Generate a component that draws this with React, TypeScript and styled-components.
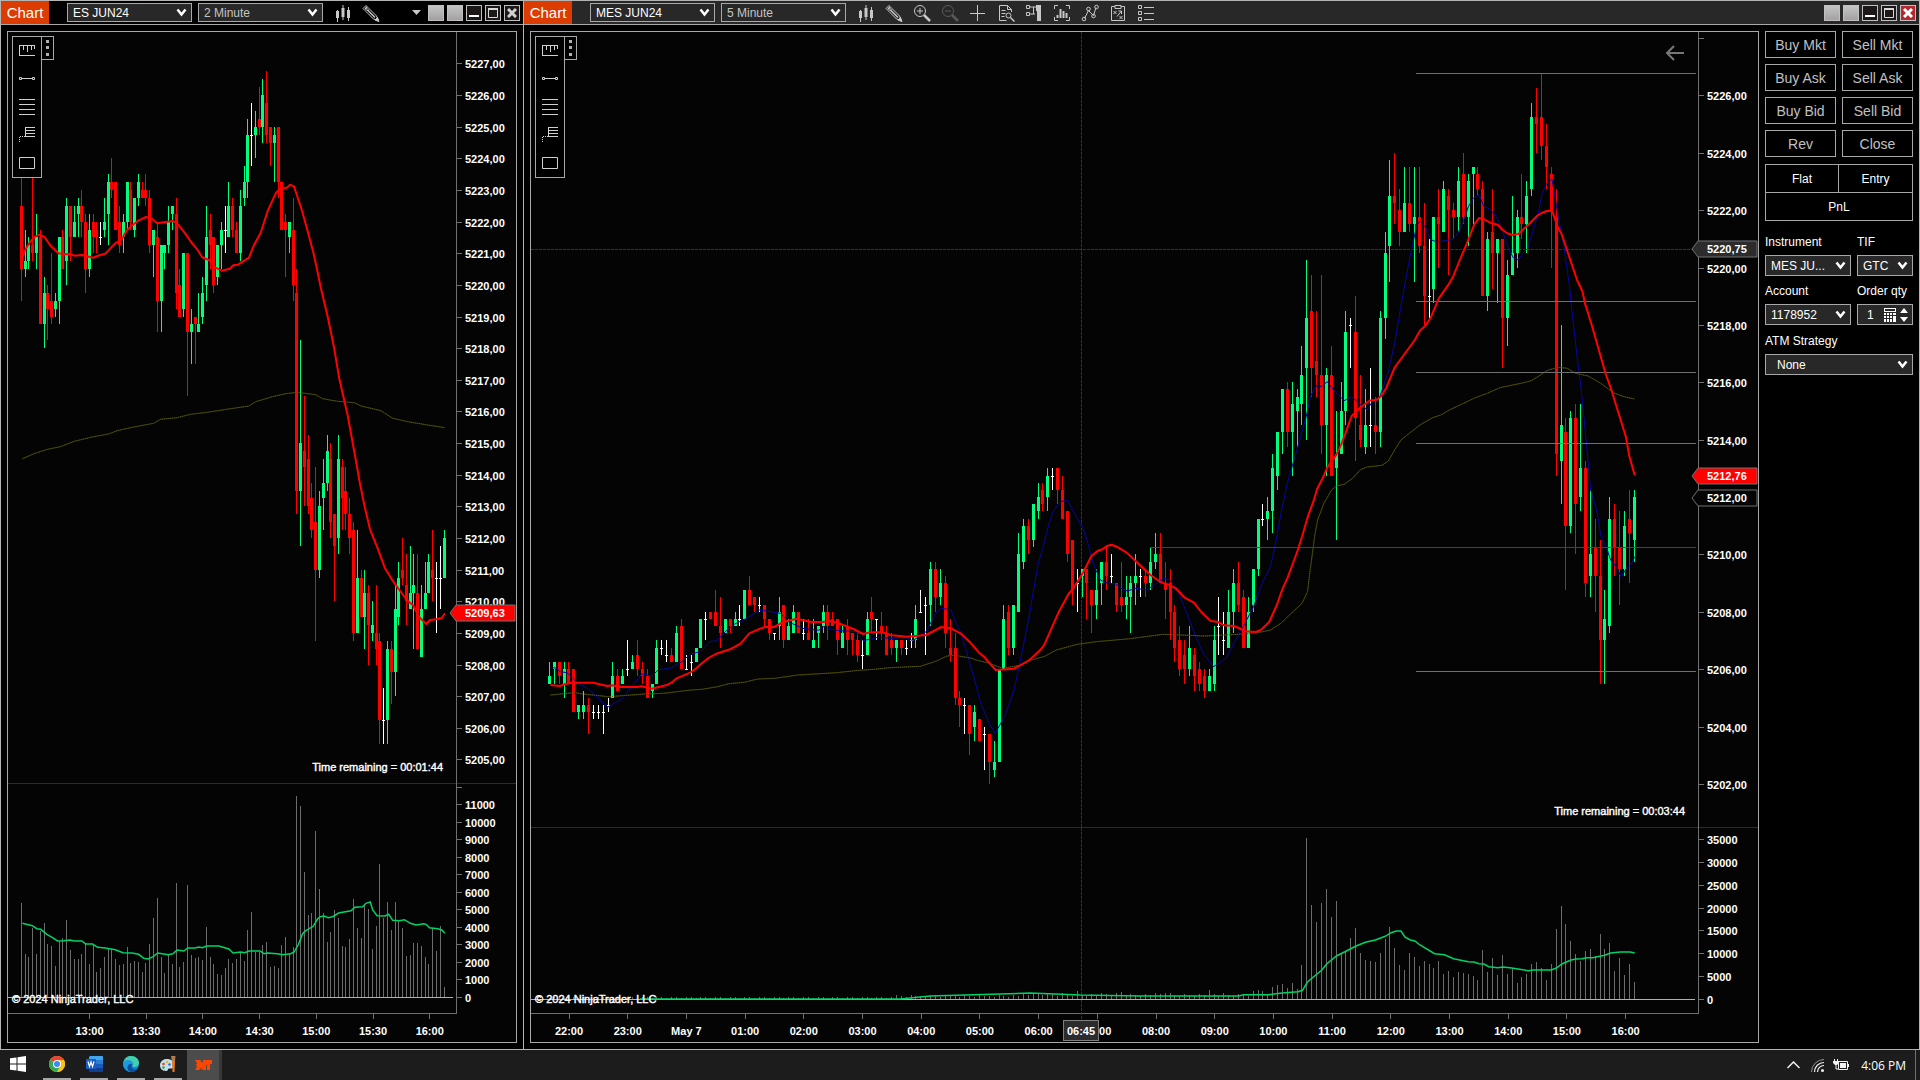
import React from "react";
import styled, { createGlobalStyle, css } from "styled-components";

/* ------------------------------------------------------------------ */
/* Market data: each bar is "<type> high top bottom low", in quarter   */
/* points above 5200. g = up, r = down, w = unchanged.                 */
/* ------------------------------------------------------------------ */

const ES_BARS = `r95 90 82 78,g87 83 82 81,g86 85 83 82,r95 85 84 83,g89 86 84 82,r87 86 75 75,g81 79 75 72,r80 79 77 73,r84 78 76 75,g79 78 77 76,
g86 86 78 75,r87 86 82 82,g91 90 83 80,r90 90 86 83,g90 88 86 86,g91 90 89 86,r92 90 88 86,r89 88 82 79,g89 87 82 81,r89 88 86 84,
r88 87 86 84,w88 86 86 85,g91 88 87 86,g94 93 89 85,r96 93 92 91,r93 93 87 87,r90 88 85 84,g89 88 86 84,g93 93 88 87,r93 92 88 87,
g91 91 87 86,g94 93 91 90,r93 92 91 91,r94 92 91 90,r92 91 85 84,g87 87 85 81,r88 86 78 74,g85 85 78 74,g85 85 84 82,g90 88 85 84,
g90 90 89 87,r91 89 79 77,r82 80 76 76,g84 84 77 76,r84 84 74 66,g77 75 74 70,r76 76 75 70,g79 75 74 74,g81 79 76 75,g90 86 80 78,
r89 87 85 82,r86 86 80 79,g85 85 81 80,g88 87 85 82,w90 87 87 84,g93 90 86 86,r91 90 87 86,r88 87 84 84,g92 90 84 83,g95 93 91 90,
g101 99 93 91,w103 99 99 95,g102 100 99 96,r105 101 100 99,g106 104 100 98,r107 103 99 98,r100 100 98 95,g100 99 98 93,r100 100 93 91,r93 93 87 87,
r89 88 87 81,g88 88 86 84,r91 87 80 78,r82 79 54 51,g73 60 54 47,r66 59 57 52,r61 58 52 51,r55 53 49 48,r57 50 44 35,g54 52 44 43,
g58 55 53 49,g61 59 55 54,r60 58 50 48,r51 51 47 40,g61 58 48 46,r58 57 53 49,r57 54 51 49,r53 51 48 46,r50 49 36 35,g49 43 36 36,
r44 43 38 38,g44 41 38 34,r42 41 37 32,g40 37 36 35,r42 36 34 32,r36 35 25 22,w29 25 25 22,g35 34 25 22,r35 34 31 27,g42 39 31 28,
g45 43 38 37,r48 44 43 42,r46 42 40 37,g47 41 39 39,g46 42 41 34,r46 41 34 34,g42 39 33 33,g45 41 39 39,g46 45 41 41,r49 44 43 40,
w45 43 43 36,w47 43 43 39,g49 48 43 43`;

const MES_BARS = `g25 23 22 22,g25 25 24 22,r25 25 23 22,g25 24 22 20,r25 24 22 22,r24 24 18 18,g19 19 18 17,g21 19 18 17,r20 19 18 15,w19 18 18 17,
w19 18 18 17,w19 18 18 15,w20 19 19 18,g25 23 20 20,r24 23 21 21,g24 23 22 22,w28 24 24 23,g26 25 24 24,r28 26 24 23,r25 24 23 22,
r24 23 20 20,g22 22 21 20,g28 27 22 22,w28 27 27 26,w28 26 26 25,r27 26 25 25,g30 29 25 25,r31 30 24 24,w26 24 24 24,w26 25 25 23,
g27 27 25 25,g31 31 27 27,w32 31 31 28,r32 32 31 31,r35 32 30 30,r34 30 29 27,g31 31 29 29,r31 31 30 29,g32 31 30 30,w33 31 31 30,
g35 35 31 31,r37 35 33 33,r34 34 33 32,w34 33 33 32,r33 33 31 30,r31 31 29 28,w29 29 29 28,g34 32 30 28,r33 33 28 27,g31 30 28 28,
g33 32 29 29,r32 32 29 29,w31 29 29 28,r31 29 28 28,g31 28 27 27,g30 30 29 27,g33 32 30 29,r33 32 30 28,r32 31 30 30,r31 31 28 26,
g30 29 27 27,r31 30 28 26,r29 29 28 26,r29 28 26 25,w28 26 26 24,g32 31 26 26,r34 32 31 29,w31 31 31 28,r32 30 29 28,r30 29 26 26,
r29 28 27 26,g28 28 27 25,r28 28 27 26,w28 27 27 26,w29 28 28 27,g33 31 28 27,w35 32 32 32,w34 33 33 26,g39 38 33 30,r39 38 34 32,
g38 36 34 33,r37 36 29 27,r31 27 26 25,r29 27 20 19,r21 20 19 16,w20 19 19 15,r19 19 15 12,g19 18 16 14,r17 17 14 14,w16 15 15 10,
r15 15 11 8,g14 11 10 9,g24 24 11 11,g33 31 24 24,r33 32 27 26,g33 33 27 26,g43 40 32 32,g45 44 39 38,r45 44 42 40,g47 47 42 41,
g50 48 46 45,r50 49 47 46,g52 51 48 46,w52 51 51 49,r52 52 49 47,r51 49 45 45,r46 46 40 39,r42 42 35 33,w38 36 36 32,g38 38 37 34,
r38 38 36 31,r35 35 33 29,g38 35 33 31,g39 39 36 33,r41 39 37 35,w40 37 37 36,r36 36 33 32,r39 34 33 32,g37 34 33 31,g37 36 34 29,
g40 37 36 33,w38 37 37 34,r38 37 36 34,g41 39 36 35,g43 40 39 38,r43 40 36 36,r39 36 35 31,r38 36 32 28,r33 32 27 25,r30 28 24 23,
r28 26 24 22,g30 27 24 23,r27 26 23 21,r25 24 22 21,r24 23 21 20,g24 23 21 21,g30 28 22 21,w34 30 30 26,w32 28 28 26,g35 32 27 27,
g38 36 32 29,r39 36 33 32,r35 34 27 27,g34 32 27 27,g38 38 33 32,g45 45 38 37,w47 45 45 44,g48 46 45 42,g54 52 46 43,g57 57 51 49,
g63 63 57 54,r64 63 57 55,g64 61 57 51,g63 62 60 55,g69 65 61 58,g81 73 66 56,r79 74 66 62,r74 67 65 62,r79 65 58 54,g66 65 58 51,
r69 65 51 51,g60 54 52 42,g64 60 54 54,g74 71 60 58,w73 72 72 66,r76 71 59 53,r65 58 56 55,g63 58 55 54,w66 58 58 55,r62 58 57 54,
g74 73 57 55,g85 82 73 70,g95 90 83 78,r96 90 89 86,r91 88 85 83,g94 89 85 85,r94 89 86 85,g94 87 86 78,r94 87 83 82,r89 83 76 72,
w84 76 76 73,g87 87 77 75,r91 87 86 80,g92 91 85 85,r91 90 88 79,r89 88 87 84,g94 92 87 85,r96 93 87 86,g93 92 87 83,g94 94 93 86,
r94 93 91 90,r92 91 76 76,g85 84 76 74,r91 85 82 77,g84 84 82 75,r84 84 73 66,g81 79 73 69,g90 82 79 79,g88 87 82 80,r93 87 86 84,
g92 90 86 82,g103 101 91 90,r105 101 100 96,r107 101 97 95,r100 97 94 91,r94 93 88 80,r91 87 54 51,g72 58 53 47,r59 57 44 35,g60 59 44 43,
r61 59 47 40,g61 52 48 46,r53 52 36 34,g49 40 37 34,r45 41 37 32,r42 37 28 22,g35 31 28 22,g48 45 30 29,r47 45 41 37,r46 41 38 33,
g46 44 38 37,r49 45 43 36,g49 48 42 39`;

/* Volume of each bar, in thirds of a pixel of bar height. */
const from = (base: number, tops: number[]) => tops.map((t) => base - t);

const ES_VOLUME = from(652, [
  369, 522, 531, 444, 522, 453, 429, 492, 498, 558, 484, 474, 420, 510, 537, 537, 522, 490, 552, 492, 576, 564, 531, 507, 507,
  537, 555, 552, 501, 549, 543, 546, 576, 549, 492, 414, 354, 531, 579, 524, 552, 309, 561, 546, 315, 525, 534, 531, 540, 441,
  531, 552, 582, 585, 564, 537, 549, 537, 516, 543, 450, 396, 516, 516, 495, 486, 561, 558, 564, 495, 471, 519, 501, 48, 78,
  276, 405, 399, 153, 327, 400, 486, 456, 390, 414, 498, 501, 477, 357, 444, 474, 372, 387, 507, 438, 252, 414, 366, 450, 366,
  423, 444, 528, 525, 489, 489, 500, 531, 552, 444, 513, 438, 621,
]);

const QUIET_SESSION = Array.from({ length: 145 }, (_, i) =>
  i < 70 ? 3 + (i % 3) * 2 : i < 96 ? 6 + ((i * 5) % 7) : 8 + ((i * 7) % 11) + (i % 9 === 0 ? 8 : 0),
);
const MES_VOLUME = QUIET_SESSION.concat(
  from(598, [
    570, 573, 583, 561, 555, 552, 564, 549, 567, 495, 114, 315, 366, 309, 267, 351, 303, 462, 453, 414, 384, 459, 480, 483, 486,
    459, 417, 381, 444, 495, 510, 459, 471, 498, 483, 492, 504, 483, 522, 513, 531, 516, 519, 522, 528, 540, 450, 516, 474, 525,
    465, 522, 504, 549, 531, 522, 492, 486, 504, 540, 492, 387, 318, 372, 423, 462, 483, 453, 447, 468, 402, 447, 429, 513, 474,
    525, 492, 546,
  ]),
);

/* ------------------------------------------------------------------ */
/* Indicator curves                                                    */
/* ------------------------------------------------------------------ */

const seg = (ox: number, oy: number, kx: number, pts: number[]) => {
  const out: string[] = [];
  for (let i = 0; i < pts.length; i += 2) {
    out.push(`${(ox + pts[i] / kx).toFixed(1)},${(oy + pts[i + 1] / 3).toFixed(1)}`);
  }
  return out.join(" ");
};

const ES_FAST =
  seg(0, 170, 2.992, [
    65, 270, 75, 240, 90, 215, 105, 200, 118, 194, 133, 201, 150, 226, 175, 250, 195, 253, 210, 252, 222, 257, 245, 255, 278, 263,
    300, 255, 315, 251, 345, 220, 365, 207, 380, 180, 400, 163, 415, 151, 437, 141, 452, 145, 470, 160, 490, 157, 517, 153, 530, 160,
    550, 185, 575, 220, 590, 238, 605, 262, 630, 272, 645, 293, 663, 302, 688, 296, 698, 286, 712, 284, 745, 263, 760, 225, 780, 188,
    800, 125, 825, 70, 838, 56, 858, 53, 868, 44, 880, 50, 903, 120, 925, 200, 938, 250, 948, 295, 960, 355, 980, 437, 1000, 535,
    1015, 625, 1040, 735, 1070, 900,
  ]) +
  " " +
  seg(0, 480, 2.992, [
    1076, 5, 1090, 75, 1107, 148, 1130, 205, 1152, 265, 1175, 302, 1195, 330, 1217, 360, 1235, 375, 1255, 412, 1275, 432, 1287, 420,
    1305, 418, 1322, 414, 1331, 400,
  ]);

const ES_SLOW = seg(0, 170, 2.992, [
  67, 866, 105, 850, 142, 838, 180, 830, 222, 814, 280, 800, 325, 792, 350, 782, 400, 771, 460, 760, 480, 748, 530, 743, 570, 733,
  620, 727, 690, 716, 745, 708, 765, 695, 815, 680, 855, 671, 890, 667, 945, 674, 965, 686, 1010, 694, 1060, 698, 1080, 708, 1140, 722,
  1175, 745, 1220, 755, 1280, 765, 1331, 773,
]);

const ES_VOLUME_AVG = seg(0, 780, 2.992, [
  67, 430, 97, 437, 110, 446, 122, 448, 140, 463, 157, 473, 172, 483, 190, 482, 210, 480, 222, 483, 245, 483, 256, 492, 277, 492,
  292, 502, 315, 504, 345, 509, 368, 518, 395, 519, 415, 523, 430, 535, 443, 537, 458, 530, 472, 519, 490, 522, 503, 524, 517, 521,
  530, 510, 550, 513, 562, 504, 583, 504, 595, 501, 605, 503, 618, 498, 655, 498, 685, 507, 697, 519, 720, 516, 732, 518, 745, 513,
  778, 513, 790, 521, 800, 519, 830, 521, 845, 524, 870, 521, 880, 516, 893, 493, 905, 462, 913, 453, 925, 446, 937, 439, 950, 417,
  958, 410, 970, 408, 982, 413, 995, 410, 1013, 399, 1050, 392, 1062, 382, 1085, 380, 1095, 370, 1108, 366, 1115, 390, 1128, 407,
  1152, 408, 1163, 403, 1175, 421, 1195, 422, 1210, 419, 1228, 430, 1245, 435, 1268, 431, 1275, 433, 1285, 443, 1310, 446, 1322, 450,
  1331, 460,
]);

const MES_FAST = [
  seg(530, 450, 2.613, [
    53, 705, 78, 708, 95, 701, 110, 698, 165, 698, 202, 708, 215, 706, 235, 711, 280, 711, 292, 709, 318, 716, 355, 706, 370, 698,
    383, 685, 420, 667, 433, 656, 446, 643, 465, 625, 485, 612, 525, 597, 550, 581, 573, 550, 595, 539, 613, 531, 638, 531, 662, 516,
    697, 506, 735, 516, 765, 516, 783, 513, 803, 518, 845, 537, 870, 552, 890, 547, 920, 547, 945, 556, 985, 560, 1035, 555,
    1075, 531, 1100, 535, 1125, 550, 1150, 577, 1175, 610, 1188, 622, 1205, 645, 1217, 660, 1265, 656, 1305, 630, 1330, 604,
    1343, 586, 1380, 490, 1407, 432, 1420, 415, 1445, 368, 1467, 318, 1483, 303, 1497, 297, 1507, 288, 1520, 284, 1533, 290, 1559, 308,
  ]),
  seg(1100, 230, 2.376, [
    65, 970, 92, 1002, 120, 1035, 145, 1057, 165, 1065, 180, 1075, 200, 1102, 223, 1118, 240, 1145, 262, 1172, 280, 1176, 295, 1186,
    318, 1188, 330, 1194, 345, 1204, 370, 1206, 382, 1200, 402, 1176, 420, 1125, 434, 1075, 446, 1042, 457, 1005, 470, 960, 480, 920,
    495, 855, 506, 818, 516, 776, 530, 742, 540, 712, 562, 674, 575, 638, 598, 558, 618, 533, 640, 512, 657, 509, 668, 499, 680, 474,
    700, 413, 715, 387, 748, 330, 760, 302, 772, 289, 785, 265, 805, 205, 828, 164, 840, 137, 855, 90, 870, 45,
  ]),
  seg(1340, 30, 3, [
    403, 583, 417, 564, 432, 568, 455, 580, 473, 584, 488, 600, 502, 610, 517, 615, 535, 612, 562, 587, 592, 557, 605, 549, 620, 543,
    636, 542, 655, 595, 665, 613, 685, 672, 712, 752, 727, 783, 737, 828,
  ]),
  seg(1440, 300, 3, [432, 0, 455, 75, 497, 222, 515, 272, 525, 305, 545, 370, 558, 412, 568, 468, 584, 526]),
].join(" ");

const MES_SLOW = [
  seg(530, 450, 2.613, [
    53, 735, 115, 728, 140, 732, 205, 740, 300, 732, 350, 730, 420, 720, 450, 718, 490, 710, 520, 701, 560, 697, 595, 687, 640, 685,
    700, 675, 800, 668, 860, 661, 900, 658, 940, 653, 1020, 649, 1060, 634, 1090, 618, 1110, 616, 1155, 625, 1165, 630, 1195, 638,
    1235, 655, 1285, 645, 1305, 632, 1345, 619, 1375, 600, 1430, 583, 1480, 575, 1568, 566,
  ]),
  seg(1100, 230, 2.376, [
    150, 1213, 250, 1218, 340, 1212, 380, 1207, 405, 1200, 430, 1180, 450, 1155, 480, 1120, 493, 1085, 500, 1015, 510, 920, 517, 870,
    532, 820, 550, 780, 562, 768, 580, 763, 600, 745, 620, 718, 635, 711, 670, 706, 685, 693, 700, 660, 715, 630, 735, 610, 760, 585,
    790, 563, 810, 555, 830, 540, 890, 504, 920, 490, 950, 473, 1000, 460, 1025, 452, 1040, 440, 1065, 420, 1090, 412, 1110, 415,
    1130, 430, 1160, 438, 1190, 460, 1220, 488, 1245, 500, 1270, 507,
  ]),
].join(" ");

const MES_SIGNAL = [
  seg(530, 450, 2.613, [
    53, 652, 70, 655, 78, 665, 97, 668, 110, 682, 123, 698, 150, 715, 175, 740, 202, 772, 240, 747, 265, 712, 292, 672, 318, 678,
    335, 660, 370, 653, 395, 636, 420, 612, 445, 605, 470, 575, 488, 572, 510, 545, 535, 522, 570, 503, 600, 480, 655, 490, 675, 515,
    712, 535, 755, 541, 765, 530, 800, 541, 850, 545, 870, 572, 910, 562, 955, 566, 970, 557, 1000, 572, 1035, 545, 1060, 490,
    1075, 475, 1100, 480, 1112, 516, 1125, 545, 1138, 595, 1162, 690, 1178, 760, 1200, 820, 1215, 850, 1240, 800, 1265, 720,
    1285, 610, 1305, 495, 1328, 340, 1340, 295, 1355, 225, 1367, 185, 1385, 155, 1405, 151, 1420, 185, 1445, 235, 1458, 280,
    1470, 335, 1490, 390, 1505, 398, 1530, 402, 1545, 415,
  ]),
  seg(1100, 230, 2.376, [
    65, 1083, 85, 1075, 110, 1080, 130, 1065, 150, 1045, 165, 1050, 180, 1070, 200, 1130, 218, 1190, 245, 1270, 270, 1310, 300, 1285,
    320, 1235, 340, 1190, 365, 1130, 385, 1060, 405, 1010, 418, 935, 430, 850, 445, 760, 470, 650, 490, 560, 500, 500, 515, 465,
    525, 470, 540, 455, 555, 480, 580, 512, 598, 500, 620, 525, 635, 540, 645, 518, 665, 500, 685, 425, 700, 340, 715, 230, 735, 90,
    750, 0,
  ]),
  seg(1340, 30, 3, [
    228, 590, 240, 573, 255, 590, 270, 628, 290, 636, 340, 628, 355, 607, 370, 575, 385, 530, 400, 505, 417, 494, 432, 530, 450, 537,
    470, 562, 487, 600, 505, 655, 520, 683, 535, 690, 548, 670, 563, 655, 578, 605, 595, 550, 605, 495, 620, 460, 636, 447, 645, 500,
    655, 560, 672, 650, 690, 780,
  ]),
  seg(1440, 300, 3, [
    392, 0, 410, 160, 425, 280, 440, 440, 452, 570, 470, 630, 483, 710, 500, 745, 512, 780, 530, 802, 543, 830, 560, 805, 572, 795,
    584, 770,
  ]),
].join(" ");

const MES_VOLUME_AVG =
  "640,999 900,999 930,996 1000,994 1030,993 1080,995 " +
  seg(1140, 800, 2.529, [
    0, 588, 250, 588, 262, 584, 325, 584, 360, 579, 400, 575, 411, 571, 423, 547, 436, 533, 460, 510, 472, 492, 497, 468, 522, 453,
    545, 439, 570, 427, 595, 420, 620, 409, 635, 398, 648, 393, 660, 393, 670, 411, 682, 419, 695, 423, 708, 435, 745, 461, 770, 464,
    793, 476, 830, 485, 845, 486, 857, 491, 870, 492, 882, 500, 905, 503, 918, 501, 940, 504, 982, 512, 995, 510, 1040, 510,
    1053, 504, 1067, 492, 1090, 480, 1103, 477, 1118, 476, 1130, 473, 1145, 473, 1175, 466, 1190, 459, 1215, 456, 1240, 456, 1251, 459,
  ]);

/* ------------------------------------------------------------------ */
/* Styles                                                              */
/* ------------------------------------------------------------------ */

const LINE = "#a8a8a8";

const Global = createGlobalStyle`
  * { box-sizing: border-box; }
  body { margin: 0; background: #000; }
  body, button, input, select { font-family: "Liberation Sans", Arial, sans-serif; }
`;

const Desktop = styled.div`
  height: 100vh;
  display: flex;
  flex-direction: column;
  overflow: hidden;
  color: #fff;
  font-size: 12px;
`;

const Workspace = styled.main`
  flex: 1;
  min-height: 0;
  display: grid;
  grid-template-columns: minmax(0, 523fr) minmax(0, 1397fr);
`;

const Window = styled.section<{ $last?: boolean }>`
  display: flex;
  flex-direction: column;
  min-height: 0;
  background: #000;
  border: 1px solid #b4b4b4;
  border-right-width: ${(p) => (p.$last ? 1 : 0)}px;
`;

const TitleBar = styled.header<{ $active?: boolean }>`
  flex: none;
  height: 24px;
  display: flex;
  align-items: center;
  padding-right: 3px;
  border-bottom: 1px solid ${LINE};
  background: ${(p) => (p.$active ? "#282828" : "#000")};
`;

const TitleTag = styled.h1`
  margin: 0 18px 0 0;
  width: 48px;
  height: 23px;
  line-height: 23px;
  text-align: center;
  font-size: 15px;
  font-weight: 400;
  background: #dc3c00;
`;

const SelectBox = styled.span<{ $h?: number }>`
  display: grid;
  align-items: center;
  height: ${(p) => p.$h ?? 21}px;
  background: #282828;
  border: 1px solid ${LINE};
  > * { grid-area: 1 / 1; }
  > svg { justify-self: end; margin-right: 4px; pointer-events: none; }
`;

const TitleSelectBox = styled(SelectBox)`
  width: 125px;
  margin-right: 6px;
`;

const Select = styled.select<{ $dim?: boolean; $pad?: number }>`
  appearance: none;
  width: 100%;
  height: 100%;
  min-width: 0;
  margin: 0;
  padding: 0 0 0 ${(p) => p.$pad ?? 5}px;
  border: 0;
  outline: 0;
  background: transparent;
  color: ${(p) => (p.$dim ? "#c4c4c4" : "#fff")};
  font-size: 12px;
`;

const bareButton = css`
  display: grid;
  place-items: center;
  padding: 0;
  border: 0;
  background: none;
  color: #c8c8c8;
`;

const IconButton = styled.button<{ $narrow?: boolean }>`
  ${bareButton}
  flex: none;
  width: ${(p) => (p.$narrow ? 24 : 28)}px;
  height: 22px;
  &:disabled { color: #5a5a5a; }
`;

const Spacer = styled.span`
  flex: 1;
`;

const WindowButtons = styled.div`
  display: flex;
  align-items: center;
  gap: 3px;
`;

const WindowButton = styled.button<{ $kind?: "link" | "close" }>`
  ${bareButton}
  width: 16px;
  height: 16px;
  border: 1px solid #c0c0c0;
  color: #fff;
  background: ${(p) =>
    p.$kind === "link" ? "linear-gradient(#c4c4c4, #a4a0a4)" : p.$kind === "close" ? "#b42830" : "#1c1818"};
`;

const Content = styled.div`
  flex: 1;
  min-height: 0;
  display: flex;
  gap: 6px;
  padding: 6px;
`;

const ChartFrame = styled.div`
  position: relative;
  flex: 1;
  min-width: 0;
  display: flex;
  border: 1px solid ${LINE};
  background: #040404;
`;

const Plot = styled.svg`
  flex: 1;
  min-width: 0;
  min-height: 0;
  font-family: "Liberation Sans", Arial, sans-serif;
  font-size: 11px;
  text { fill: #fff; font-weight: 700; }
  text.note { font-weight: 400; stroke: #fff; stroke-width: 0.4; }
`;

const Palette = styled.div`
  position: absolute;
  top: 4px;
  left: 4px;
  display: flex;
  align-items: flex-start;
`;

const Tools = styled.div`
  display: flex;
  flex-direction: column;
  width: 30px;
  background: #000;
  border: 1px solid ${LINE};
`;

const ToolButton = styled.button`
  ${bareButton}
  height: 28px;
  color: #d0d0d0;
`;

const Grip = styled.button`
  ${bareButton}
  width: 12px;
  height: 24px;
  background: #000;
  border: 1px solid ${LINE};
  border-left: 0;
`;

const OrderPanel = styled.aside`
  flex: none;
  width: 148px;
  display: flex;
  flex-direction: column;
`;

const OrderButtons = styled.div`
  display: grid;
  grid-template-columns: 1fr 1fr;
  gap: 6px;
`;

const OrderButton = styled.button`
  height: 27px;
  padding: 0;
  border: 1px solid ${LINE};
  background: #000;
  color: #c0c0c0;
  font-size: 14px;
`;

const Position = styled.div`
  margin-top: 7px;
  display: grid;
  grid-template-columns: 72px 1fr;
  gap: 1px;
  padding: 1px;
  background: ${LINE};
`;

const PositionCell = styled.div<{ $wide?: boolean }>`
  grid-column: ${(p) => (p.$wide ? "1 / -1" : "auto")};
  height: 27px;
  line-height: 29px;
  text-align: center;
  background: #000;
`;

const Fields = styled.div`
  margin-top: 12px;
  display: grid;
  grid-template-columns: 86px 56px;
  column-gap: 6px;
`;

const Field = styled.label<{ $wide?: boolean }>`
  grid-column: ${(p) => (p.$wide ? "1 / -1" : "auto")};
  margin-top: ${(p) => (p.$wide ? 1 : 0)}px;
  display: flex;
  flex-direction: column;
  height: 49px;
  line-height: 18px;
  > span:first-child { height: 22px; }
`;

const QtyInput = styled.input`
  width: 100%;
  height: 100%;
  min-width: 0;
  padding: 0 0 0 9px;
  border: 0;
  outline: 0;
  background: transparent;
  color: #fff;
  font-size: 12px;
`;

const Taskbar = styled.footer`
  flex: none;
  height: 30px;
  display: flex;
  background: #1c1c1c;
`;

const TaskButton = styled.button<{ $running?: boolean; $active?: boolean }>`
  ${bareButton}
  width: 28px;
  margin-right: 9px;
  border-bottom: 2px solid ${(p) => (p.$running ? "#a8a8a8" : "transparent")};
  ${(p) =>
    p.$active &&
    css`
      width: 35px;
      margin: 0 0 0 -4px;
      border-bottom: 0;
      border-right: 3px solid #383838;
      background: #4c4c4c;
    `}
`;

const StartButton = styled(TaskButton)`
  width: 36px;
  margin-right: 7px;
`;

const Tray = styled.div`
  display: flex;
  align-items: center;
  padding-right: 9px;
  margin-right: 4px;
  border-right: 1px solid #707070;
  font-family: "Open Sans", "Noto Sans", sans-serif;
`;

const TrayButton = styled.button`
  ${bareButton}
  width: 24px;
  height: 30px;
  color: #f0f0f0;
`;

const Clock = styled.time`
  margin-left: 8px;
`;

/* ------------------------------------------------------------------ */
/* Icons                                                               */
/* ------------------------------------------------------------------ */

const Chevron = () => (
  <svg width="11" height="9" viewBox="0 0 11 9" fill="none" stroke="#fff" strokeWidth="2.500">
    <path d="M1.500 1.500 5.500 6.500 9.500 1.500" />
  </svg>
);

const Glyph = ({ children }: { children: React.ReactNode }) => (
  <svg width="18" height="18" viewBox="0 0 18 18" fill="none" stroke="currentColor">
    {children}
  </svg>
);

const CandlesIcon = () => (
  <Glyph>
    <path d="M3.500 6v12M9 1v15M14.500 3v14" />
    <path d="M2 7h3v7H2zM7.500 4h3v9h-3zM13 6h3v8h-3z" fill="currentColor" stroke="none" />
  </Glyph>
);
const PencilIcon = () => (
  <Glyph>
    <path d="M1 4.500 4 1.500 6 3.500 3 6.500zM4 7.500 11.500 15 16.500 17 14.500 12 7 4.500z" />
    <path d="M5.500 6 13 13.500M3 5 5 3" strokeWidth="1.500" />
    <path d="m13 16 4 1.500-1.500-4z" fill="currentColor" />
  </Glyph>
);
const ZoomIcon = ({ plus }: { plus?: boolean }) => (
  <Glyph>
    <circle cx="7" cy="7" r="5.500" />
    <path d={plus ? "M4 7h6M7 4v6" : "M4 7h6"} />
    <path d="m11 11 6 6" strokeWidth="2.500" />
  </Glyph>
);
const CrossIcon = () => (
  <Glyph>
    <path d="M8.500 1v16M1 9.500h15" />
  </Glyph>
);
const DataBoxIcon = () => (
  <Glyph>
    <path d="M14.500 8V5.500L10.500 1.500H2.500v15h7M10.500 1.500v4h4M4.500 6.500h4M4.500 9.500h4M4.500 12.500h3" />
    <circle cx="11.500" cy="11.500" r="2.500" />
    <path d="m13.500 13.500 4 4" strokeWidth="1.500" />
  </Glyph>
);
const TraderIcon = () => (
  <Glyph>
    <path d="M1.500 1.500h3v3h-3zM1.500 8.500h3v3h-3zM5 3h7M5 10h5M8.500 3v7" />
    <path d="M11 1h5v16h-4V7h-1z" fill="currentColor" stroke="none" />
  </Glyph>
);
const IndicatorIcon = () => (
  <Glyph>
    <path d="M1.500 5V1.500H5M13 1.500h3.500V5M16.500 13v3.500H13M5 16.500H1.500V13" />
    <path d="M4.500 14v-3M7.500 14V5M10.500 14V7M13.500 14V9" strokeWidth="2" />
  </Glyph>
);
const StrategyIcon = () => (
  <Glyph>
    <path d="m3.500 14.500 4-8 5 5 2.500-8" />
    <circle cx="3" cy="15" r="1.800" /><circle cx="7.500" cy="5" r="1.800" />
    <circle cx="12.500" cy="12" r="1.800" /><circle cx="15.500" cy="3" r="1.800" />
  </Glyph>
);
const ClipboardIcon = () => (
  <Glyph>
    <path d="M6 2.500H2.500v14h13v-14H12M6 1.500h6v3H6zM8 12.500 12.500 7M12.500 10V7h-3M4.500 7l3 3M7.500 7l-3 3M10.500 12l3 3M13.500 12l-3 3" />
  </Glyph>
);
const ListIcon = () => (
  <Glyph>
    <path d="M1.500 1.500h3v3h-3zM1.500 7.500h3v3h-3zM1.500 13.500h3v3h-3zM7 3.500h10M7 9.500h10M7 15.500h10" />
  </Glyph>
);

const TOOLS: [string, React.ReactNode][] = [
  ["Ruler", <path d="M1 3.500h16M1.500 3v11M1 13.500h16M5.500 4v4M9.500 4v6M13.500 4v4M16.500 4v3" />],
  ["Line", <path d="M1.500 7.500h2v2h-2zM14.500 7.500h2v2h-2zM4 8.500h10" />],
  ["Horizontal lines", <path d="M1 1.500h16M1 6.500h16M1 11.500h16M1 16.500h16" />],
  ["Fibonacci", <g><path d="M7.500 1v10M7 1.500h10M7 4.500h10M7 7.500h10M7 10.500h10" /><path d="M7 10.500H1.500V17" strokeDasharray="1 1" /></g>],
  ["Rectangle", <path d="M1.500 3.500h15v11h-15z" />],
];

/* ------------------------------------------------------------------ */
/* Chart                                                               */
/* ------------------------------------------------------------------ */

type Level = { y: number; label?: string };
type TagSpec = { y: number; text: string; fill: string };

type ChartSpec = {
  name: string;
  left: number;
  right: number;
  axisX: number;
  firstBar: number;
  barStep: number;
  bars: string;
  priceY: (quarters: number) => number;
  volumes: number[];
  volumeBase: number;
  paneY: number;
  prices: Level[];
  volumeLevels: Level[];
  times: { x: number; label: string }[];
  remaining: string;
  remainingY: number;
  tags: TagSpec[];
  fast: string;
  slow: string;
  signal?: string;
  volumeAvg: string;
  levels?: number[];
  full?: boolean;
};

const BAR_COLOR: Record<string, string> = { g: "#00ff7f", r: "#ff0000", w: "#ffffff" };
const AXIS = "#707070";
const AXIS_Y = 1013;

const Bars = ({ c }: { c: ChartSpec }) => (
  <g shapeRendering="crispEdges">
    {c.bars.split(",").map((raw, i) => {
      const bar = raw.trim();
      const [h, t, b, l] = bar.slice(1).split(" ").map((q) => Math.round(c.priceY(Number(q))));
      const x = Math.floor(c.firstBar + i * c.barStep);
      return (
        <g key={i} fill={BAR_COLOR[bar[0]]}>
          <rect x={x} y={h} width={1} height={Math.max(1, l - h)} />
          <rect x={x - 1} y={t} width={3} height={Math.max(1, b - t)} />
        </g>
      );
    })}
  </g>
);

const Tag = ({ x, right, tag }: { x: number; right: number; tag: TagSpec }) => (
  <g>
    <path
      d={`M${x - 6} ${tag.y}l6 -8H${right}v16H${x}z`}
      fill={tag.fill}
      stroke="#707070"
    />
    <text x={x + 9} y={tag.y + 4}>{tag.text}</text>
  </g>
);

const Chart = ({ c }: { c: ChartSpec }) => (
  <ChartFrame>
    <Plot
      viewBox={`${c.left} 32 ${c.right - c.left} 1010`}
      preserveAspectRatio="xMinYMin meet"
      role="img"
      aria-label={c.name}
    >
      <g shapeRendering="crispEdges" stroke={AXIS}>
        <path d={`M${c.left} ${c.paneY + 0.5}H${c.right}`} stroke="#2c2c2c" />
        <path d={`M${c.axisX + 0.5} 32V${AXIS_Y + 1}M${c.left} ${AXIS_Y + 0.5}H${c.axisX}`} />
        {[...c.prices, ...c.volumeLevels].map((p) => (
          <path key={p.y} d={`M${c.axisX + 1} ${Math.round(p.y) + 0.5}h5`} />
        ))}
        {c.times.map((t) => (
          <path key={t.x} d={`M${Math.floor(t.x) + 0.5} ${AXIS_Y + 1}v5`} />
        ))}
      </g>
      {c.full && (
        <g shapeRendering="crispEdges" stroke="#343434" strokeDasharray="3 1">
          <path d={`M${c.left} 249.5H1692M1081.5 32V1021`} />
        </g>
      )}
      <g shapeRendering="crispEdges" fill="#6c6c6c">
        {c.volumes.map((v, i) => (
          <rect
            key={i}
            x={Math.floor(c.firstBar + i * c.barStep)}
            y={c.volumeBase - Math.round(v / 3)}
            width={1}
            height={Math.round(v / 3)}
          />
        ))}
        <rect x={c.left} y={c.volumeBase} width={c.axisX - 3 - c.left} height={1} fill="#b0b0b0" />
      </g>
      <polyline points={c.volumeAvg} fill="none" stroke="#00d26a" strokeWidth={1.5} />
      <polyline points={c.slow} fill="none" stroke="#3a3a04" strokeWidth={1} />
      <Bars c={c} />
      {c.signal && <polyline points={c.signal} fill="none" stroke="#0606a0" strokeWidth={1} />}
      <polyline points={c.slow} fill="none" stroke="#545408" strokeWidth={1} strokeDasharray="1 1" />
      {c.levels && (
        <g shapeRendering="crispEdges" stroke="#707070">
          {c.levels.map((y) => (
            <path key={y} d={`M1416 ${y + 0.5}H1696`} />
          ))}
          <path d="M1150 547.5H1696" stroke="#e00000" />
        </g>
      )}
      <polyline points={c.fast} fill="none" stroke="#ff0000" strokeWidth={2} strokeLinejoin="round" />
      {[...c.prices, ...c.volumeLevels].map(
        (p) => p.label && <text key={p.label} x={c.axisX + 9} y={Math.round(p.y) + 5}>{p.label}</text>,
      )}
      {c.times.map((t) => (
        <text key={t.label} x={t.x} y={1035} textAnchor="middle">{t.label}</text>
      ))}
      <text className="note" x={c.axisX - 13} y={c.remainingY} textAnchor="end">{c.remaining}</text>
      <text className="note" x={c.left + 4} y={1003}>© 2024 NinjaTrader, LLC</text>
      {c.tags.map((t) => (
        <Tag key={t.text} x={c.axisX} right={c.right - 1} tag={t} />
      ))}
      {c.full && (
        <g>
          <rect x="1063.5" y="1020.5" width="35" height="20" fill="#2c2c2c" stroke="#808080" />
          <text x="1081" y="1035" textAnchor="middle">06:45</text>
          <path d="M1684 53H1667M1674 46l-7 7 7 7" fill="none" stroke="#787878" strokeWidth="2" />
        </g>
      )}
    </Plot>
    <Palette>
      <Tools>
        {TOOLS.map(([name, icon]) => (
          <ToolButton key={name} aria-label={name}>
            <Glyph>{icon}</Glyph>
          </ToolButton>
        ))}
      </Tools>
      <Grip aria-label="Move tools">
        <svg width="3" height="16" fill="#b0b0b0">
          <path d="M0 0h3v3H0zM0 6h3v3H0zM0 13h3v3H0z" />
        </svg>
      </Grip>
    </Palette>
  </ChartFrame>
);

const esPrice = (q: number) => 63.4 + (108 - q) * 7.91;
const mesPrice = (q: number) => 95.4 + (104 - q) * 7.172;
const range = (n: number) => Array.from({ length: n }, (_, i) => i);
const clock = (minutes: number) => {
  const m = minutes % 1440;
  return `${String(Math.floor(m / 60)).padStart(2, "0")}:${String(m % 60).padStart(2, "0")}`;
};

const ES: ChartSpec = {
  name: "ES JUN24 2 minute chart",
  left: 8,
  right: 516,
  axisX: 456,
  firstBar: 21.4,
  barStep: 3.774,
  bars: ES_BARS,
  priceY: esPrice,
  volumes: ES_VOLUME,
  volumeBase: 997,
  paneY: 783,
  prices: range(23).map((i) => ({ y: esPrice(108 - i * 4), label: `${5227 - i},00` })),
  volumeLevels: range(13).map((i) => ({ y: 997 - i * 17.54, label: i < 12 ? String(i * 1000) : undefined })),
  times: range(7).map((i) => ({ x: 89.5 + i * 56.7, label: clock(780 + i * 30) })),
  remaining: "Time remaining = 00:01:44",
  remainingY: 771,
  tags: [{ y: 613, text: "5209,63", fill: "#ff0000" }],
  fast: ES_FAST,
  slow: ES_SLOW,
  volumeAvg: ES_VOLUME_AVG,
};

const MES: ChartSpec = {
  name: "MES JUN24 5 minute chart",
  left: 531,
  right: 1758,
  axisX: 1698,
  firstBar: 549.4,
  barStep: 4.887,
  bars: MES_BARS,
  priceY: mesPrice,
  volumes: MES_VOLUME,
  volumeBase: 999,
  paneY: 827,
  prices: range(14).map((i) => ({ y: mesPrice(112 - i * 8), label: i ? `${5228 - i * 2},00` : undefined })),
  volumeLevels: range(8).map((i) => ({ y: 999 - i * 22.84, label: String(i * 5000) })),
  times: range(19).map((i) => ({ x: 569 + i * 58.7, label: i === 2 ? "May 7" : clock(1320 + i * 60) })),
  remaining: "Time remaining = 00:03:44",
  remainingY: 815,
  tags: [
    { y: 249, text: "5220,75", fill: "#2c2c2c" },
    { y: 476, text: "5212,76", fill: "#ff0000" },
    { y: 498, text: "5212,00", fill: "#040404" },
  ],
  fast: MES_FAST,
  slow: MES_SLOW,
  signal: MES_SIGNAL,
  volumeAvg: MES_VOLUME_AVG,
  levels: [73, 301, 372, 443, 671],
  full: true,
};

/* ------------------------------------------------------------------ */
/* Window parts                                                        */
/* ------------------------------------------------------------------ */

const TitleSelect = ({ label, value, dim }: { label: string; value: string; dim?: boolean }) => (
  <TitleSelectBox $h={19}>
    <Select aria-label={label} $dim={dim}>
      <option>{value}</option>
    </Select>
    <Chevron />
  </TitleSelectBox>
);

const WindowControls = ({ active }: { active?: boolean }) => (
  <WindowButtons>
    <WindowButton $kind="link" aria-label="Link instrument" />
    <WindowButton $kind="link" aria-label="Link interval" />
    <WindowButton aria-label="Minimise">
      <svg width="10" height="10"><path d="M0 7h10v2H0z" fill="#fff" /></svg>
    </WindowButton>
    <WindowButton aria-label="Maximise">
      <svg width="10" height="10" fill="none" stroke="#d8d8d8"><path d="M.5 1.500h9v8h-9z" /><path d="M0 1h10" strokeWidth="2" /></svg>
    </WindowButton>
    <WindowButton $kind={active ? "close" : undefined} aria-label="Close">
      <svg width="10" height="10" stroke={active ? "#fff" : "#d0d0d0"} strokeWidth="3"><path d="m1 1 8 8M9 1 1 9" /></svg>
    </WindowButton>
  </WindowButtons>
);

const OrderEntry = () => (
  <OrderPanel>
    <OrderButtons>
      {["Buy Mkt", "Sell Mkt", "Buy Ask", "Sell Ask", "Buy Bid", "Sell Bid", "Rev", "Close"].map((t) => (
        <OrderButton key={t}>{t}</OrderButton>
      ))}
    </OrderButtons>
    <Position>
      <PositionCell>Flat</PositionCell>
      <PositionCell>Entry</PositionCell>
      <PositionCell $wide>PnL</PositionCell>
    </Position>
    <Fields>
      <Field>
        <span>Instrument</span>
        <SelectBox><Select><option>MES JU...</option></Select><Chevron /></SelectBox>
      </Field>
      <Field>
        <span>TIF</span>
        <SelectBox><Select><option>GTC</option></Select><Chevron /></SelectBox>
      </Field>
      <Field>
        <span>Account</span>
        <SelectBox><Select><option>1178952</option></Select><Chevron /></SelectBox>
      </Field>
      <Field>
        <span>Order qty</span>
        <SelectBox>
          <QtyInput defaultValue="1" inputMode="numeric" />
          <svg width="24" height="14" fill="#fff">
            <path d="M0 0h12v4H0zM1 1v2h10V1zM0 5h2v2H0zM3 5h2v2H3zM6 5h2v2H6zM9 5h3v2H9zM0 8h2v2H0zM3 8h2v2H3zM6 8h2v2H6zM9 8h3v6H9zM0 11h2v3H0zM3 11h2v3H3zM6 11h2v3H6z" fillRule="evenodd" />
            <path d="M16 5l4-5 4 5zM16 9h8l-4 5z" />
          </svg>
        </SelectBox>
      </Field>
      <Field $wide>
        <span>ATM Strategy</span>
        <SelectBox><Select $pad={11}><option>None</option></Select><Chevron /></SelectBox>
      </Field>
    </Fields>
  </OrderPanel>
);

const ChromeLogo = () => (
  <svg width="16" height="16" viewBox="0 0 16 16">
    <circle cx="8" cy="8" r="8" fill="#fbc116" />
    <path d="M8 8 1.070 4A8 8 0 0 1 14.930 4z" fill="#ea4335" />
    <path d="M8 8 1.070 4A8 8 0 0 0 8 16l3.500-6z" fill="#34a853" />
    <path d="M8 4h6.930A8 8 0 0 1 8 16l3.500-6z" fill="#fbc116" />
    <circle cx="8" cy="8" r="4" fill="#fff" />
    <circle cx="8" cy="8" r="3" fill="#4285f4" />
  </svg>
);
const WordLogo = () => (
  <svg width="17" height="16" viewBox="0 0 17 16">
    <path d="M4 0h12a1 1 0 0 1 1 1v3.500H3V1z" fill="#41a5ee" />
    <path d="M3 4h14v4H3z" fill="#2b7cd3" />
    <path d="M3 8h14v4H3z" fill="#185abd" />
    <path d="M3 12h14v3a1 1 0 0 1-1 1H4a1 1 0 0 1-1-1z" fill="#103f91" />
    <path d="M0 3h10v10H0z" fill="#1a5dbe" />
    <path d="m2 5.500 1.500 5L5 6l1.500 4.500 1.500-5" fill="none" stroke="#fff" strokeWidth="1.200" />
  </svg>
);
const EdgeLogo = () => (
  <svg width="16" height="16" viewBox="0 0 16 16">
    <circle cx="8" cy="8" r="8" fill="#1483d8" />
    <path d="M.5 6C2 1.500 5 0 8 0c5 0 8 3.500 8 6.800C16 9.500 14 11 11.500 11 9.500 11 9 10 9.600 9c.9-1.800-.6-4-3.600-4C3 5 1.200 6 .5 8z" fill="#43d0a8" />
    <path d="M.1 8.500C0 5 3 3.500 6 4c2.500.3 4 2.200 3.600 4.200C7 6 4 9 5.500 12c1 2.200 3.500 3.500 6 3A8 8 0 0 1 .1 8.500z" fill="#1a9be0" />
    <path d="M9.500 8.500c-2 1.500-.5 5 2.500 5 1.200 0 2.300-.4 3-1C13.500 15 11 16 9 16c-3.500 0-5.500-3.500-4-6.500 1-1.800 3-2 4.500-1z" fill="#0c4fa0" />
  </svg>
);
const PaintLogo = () => (
  <svg width="16" height="16" viewBox="0 0 16 16">
    <path d="M7 3c4 0 7 2 7 6 0 3-2 4-4 3.500-2-.4-2 .5-2.200 1.500C7 16 0 15 0 9.500 0 5.500 3 3 7 3z" fill="#c4dfec" />
    <circle cx="3.500" cy="8" r="1.300" fill="#e04030" /><circle cx="7" cy="6" r="1.300" fill="#f0b020" />
    <circle cx="3.500" cy="11.500" r="1.300" fill="#40a040" /><circle cx="9.500" cy="8.500" r="1.300" fill="#3070d0" />
    <path d="M12 5h3l-.5 11h-2z" fill="#e87818" />
    <path d="M11 0h4.500L15 5h-3z" fill="#b08050" />
  </svg>
);
const NinjaLogo = () => (
  <svg width="17" height="11" viewBox="0 0 17 11">
    <path d="M0 0h5l3 3V0h9v4h-2v6h-3V5h-1v5H8L6 8l-2 2H0l2-3-1-2 1-2z" fill="#ff4600" />
  </svg>
);

const App = () => (
  <Desktop>
    <Global />
    <Workspace>
      <Window aria-label="ES chart window">
        <TitleBar>
          <TitleTag>Chart</TitleTag>
          <TitleSelect label="Instrument" value="ES JUN24" />
          <TitleSelect label="Interval" value="2 Minute" dim />
          <IconButton aria-label="Bar style"><CandlesIcon /></IconButton>
          <IconButton aria-label="Draw"><PencilIcon /></IconButton>
          <Spacer />
          <IconButton $narrow aria-label="More">
            <svg width="9" height="5" fill="currentColor"><path d="M0 0h9L4.500 5z" /></svg>
          </IconButton>
          <WindowControls />
        </TitleBar>
        <Content>
          <Chart c={ES} />
        </Content>
      </Window>
      <Window $last aria-label="MES chart window">
        <TitleBar $active>
          <TitleTag>Chart</TitleTag>
          <TitleSelect label="Instrument" value="MES JUN24" />
          <TitleSelect label="Interval" value="5 Minute" dim />
          <IconButton aria-label="Bar style"><CandlesIcon /></IconButton>
          <IconButton aria-label="Draw"><PencilIcon /></IconButton>
          <IconButton aria-label="Zoom in"><ZoomIcon plus /></IconButton>
          <IconButton aria-label="Zoom out" disabled><ZoomIcon /></IconButton>
          <IconButton aria-label="Crosshair"><CrossIcon /></IconButton>
          <IconButton aria-label="Data box"><DataBoxIcon /></IconButton>
          <IconButton aria-label="Chart trader"><TraderIcon /></IconButton>
          <IconButton aria-label="Indicators"><IndicatorIcon /></IconButton>
          <IconButton aria-label="Data series"><StrategyIcon /></IconButton>
          <IconButton aria-label="Strategies"><ClipboardIcon /></IconButton>
          <IconButton aria-label="Properties"><ListIcon /></IconButton>
          <Spacer />
          <WindowControls active />
        </TitleBar>
        <Content>
          <Chart c={MES} />
          <OrderEntry />
        </Content>
      </Window>
    </Workspace>
    <Taskbar>
      <StartButton aria-label="Start">
        <svg width="16" height="16" fill="#fff">
          <path d="M0 2.300 6.500 1.400v6.100H0zM7.500 1.200 16 0v7.500H7.500zM0 8.500h6.500v6.100L0 13.700zM7.500 8.500H16V16l-8.500-1.200z" />
        </svg>
      </StartButton>
      <TaskButton $running aria-label="Chrome"><ChromeLogo /></TaskButton>
      <TaskButton $running aria-label="Word"><WordLogo /></TaskButton>
      <TaskButton $running aria-label="Edge"><EdgeLogo /></TaskButton>
      <TaskButton $running aria-label="Paint"><PaintLogo /></TaskButton>
      <TaskButton $active aria-label="NinjaTrader"><NinjaLogo /></TaskButton>
      <Spacer />
      <Tray>
        <TrayButton aria-label="Show hidden icons">
          <svg width="13" height="8" fill="none" stroke="currentColor" strokeWidth="1.500"><path d="m.5 7 6-6 6 6" /></svg>
        </TrayButton>
        <TrayButton aria-label="Network">
          <svg width="13" height="13" fill="none" stroke="currentColor">
            <path d="M.5 13A12.500 12.500 0 0 1 13 .5" stroke="#909090" />
            <path d="M3.500 13A9.500 9.500 0 0 1 13 3.500M6.500 13A6.500 6.500 0 0 1 13 6.500" strokeWidth="1.200" />
            <circle cx="11.500" cy="11.500" r="1.500" fill="currentColor" stroke="none" />
          </svg>
        </TrayButton>
        <TrayButton aria-label="Battery">
          <svg width="16" height="12" fill="none" stroke="currentColor">
            <path d="M5.500 2.500h9v8h-9zM15.500 5v3M1.500 0v2M4.500 0v2M3 5v5h2" />
            <path d="M7 4h6v5H7zM0 2h6v2L4 6H2L0 4z" fill="currentColor" stroke="none" />
          </svg>
        </TrayButton>
        <Clock>4:06 PM</Clock>
      </Tray>
    </Taskbar>
  </Desktop>
);

export default App;
